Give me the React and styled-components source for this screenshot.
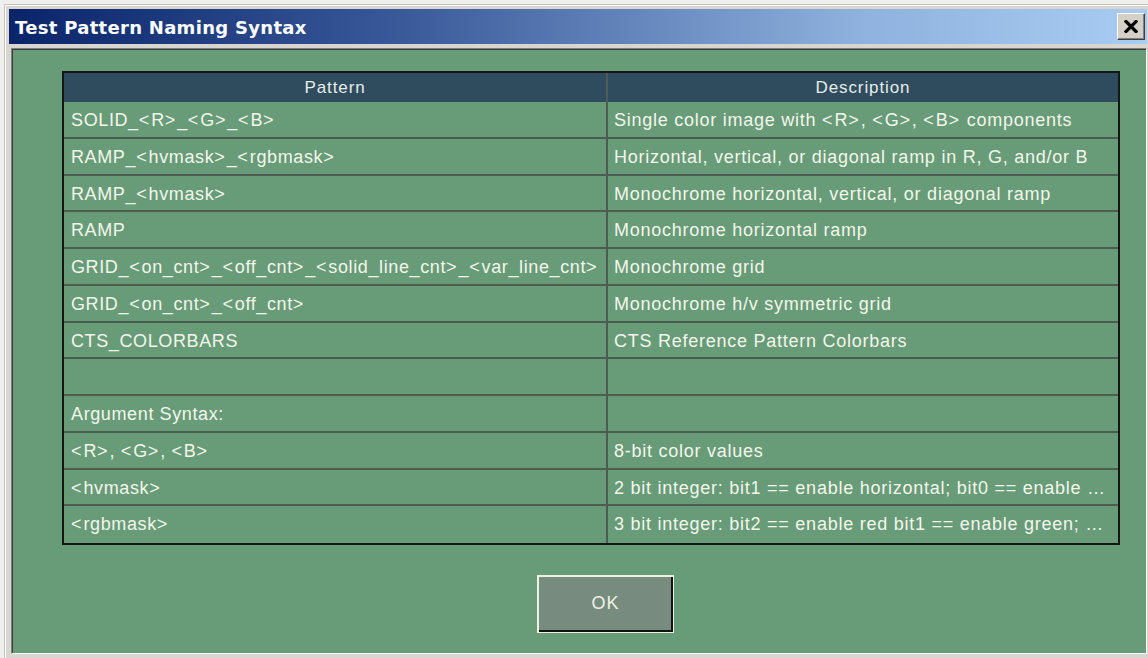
import React from "react";
import styled, { createGlobalStyle } from "styled-components";

const GlobalStyle = createGlobalStyle`
  html, body {
    margin: 0;
    padding: 0;
  }
  body {
    background: #efefed;
    overflow: hidden;
  }
  #root {
    width: 1148px;
    height: 658px;
    overflow: hidden;
  }
`;

const Desktop = styled.div`
  width: 1148px;
  height: 658px;
  box-sizing: border-box;
  padding: 4px 0 0 4px;
  background: #efefed;
  overflow: hidden;
`;

const Window = styled.div`
  width: 1148px;
  height: 670px;
  box-sizing: border-box;
  padding: 4px 5px 0 4px;
  background: #d8d6d0;
  border-top: 1px solid #c6c4be;
  border-left: 1px solid #c6c4be;
  box-shadow: inset 1px 1px 0 #fbfbf9;
  display: flex;
  flex-direction: column;
`;

const TitleBar = styled.div`
  height: 35px;
  flex: none;
  display: flex;
  align-items: center;
  justify-content: space-between;
  padding: 0 2px 0 6px;
  background: linear-gradient(to right, #0a246a 0%, #3a5a9a 35%, #8fb2de 75%, #a8ccf2 100%);
`;

const TitleText = styled.span`
  font-family: "DejaVu Sans", Verdana, sans-serif;
  font-weight: bold;
  font-size: 18px;
  letter-spacing: 0.3px;
  color: #ffffff;
  padding-top: 2px;
  white-space: nowrap;
`;

const CloseButton = styled.button`
  width: 28px;
  height: 27px;
  padding: 0;
  box-sizing: border-box;
  display: flex;
  align-items: center;
  justify-content: center;
  background: #d4d0c8;
  border-top: 1px solid #ffffff;
  border-left: 1px solid #ffffff;
  border-right: 1px solid #404040;
  border-bottom: 1px solid #404040;
  box-shadow: inset -1px -1px 0 #808080;
  cursor: default;
`;

const Client = styled.div`
  flex: none;
  height: 606px;
  margin: 4px 0 0 2px;
  box-sizing: border-box;
  padding: 22px 0 0 50px;
  background: #689b78;
  border-top: 1px solid #808080;
  border-left: 1px solid #808080;
  border-right: 1px solid #ffffff;
  border-bottom: 1px solid #ffffff;
  box-shadow: inset 1px 1px 0 #3c3c3c;
  display: flex;
  flex-direction: column;
`;

const Table = styled.div`
  width: 1058px;
  box-sizing: border-box;
  border: 2px solid #161616;
  display: grid;
  grid-template-columns: 544px 510px;
  font-family: "Liberation Sans", Arial, sans-serif;
`;

const HeaderCell = styled.div`
  height: 29px;
  line-height: 30px;
  box-sizing: border-box;
  background: #2f4c5e;
  color: #e6ece6;
  font-size: 17px;
  letter-spacing: 0.9px;
  text-align: center;
  border-right: ${(p) => (p.$left ? "2px solid #4d5e5a" : "none")};
`;

const Cell = styled.div`
  height: 36.75px;
  box-sizing: border-box;
  padding: ${(p) => (p.$left ? "0 0 0 7px" : "0 9px 0 6px")};
  border-bottom: ${(p) => (p.$last ? "none" : "2px solid #4d5c53")};
  border-right: ${(p) => (p.$left ? "2px solid #4d5c53" : "none")};
  color: #f4f6ec;
  font-size: 18px;
  letter-spacing: ${(p) => (p.$left ? "0.62px" : "0.75px")};
  line-height: 36px;
  white-space: nowrap;
  overflow: hidden;
  text-overflow: ellipsis;
`;

/* angle brackets sit a little wider in the dialog's font */
const Angle = styled.span`
  letter-spacing: 1.9px;
`;

const ButtonRow = styled.div`
  display: flex;
  padding: 30px 0 0 475px;
`;

const OkButton = styled.button`
  width: 137px;
  height: 58px;
  box-sizing: border-box;
  padding: 0 0 1px 0;
  background: #778b7f;
  border: 1px solid #eef0e0;
  box-shadow: inset 1px 1px 0 #eef0e0, inset -2px -2px 0 #121212;
  color: #eef2e6;
  font-family: "Liberation Sans", Arial, sans-serif;
  font-size: 18px;
  letter-spacing: 1px;
  cursor: default;
`;

const rows = [
  ["SOLID_<R>_<G>_<B>", "Single color image with <R>, <G>, <B> components"],
  ["RAMP_<hvmask>_<rgbmask>", "Horizontal, vertical, or diagonal ramp in R, G, and/or B"],
  ["RAMP_<hvmask>", "Monochrome horizontal, vertical, or diagonal ramp"],
  ["RAMP", "Monochrome horizontal ramp"],
  ["GRID_<on_cnt>_<off_cnt>_<solid_line_cnt>_<var_line_cnt>", "Monochrome grid"],
  ["GRID_<on_cnt>_<off_cnt>", "Monochrome h/v symmetric grid"],
  ["CTS_COLORBARS", "CTS Reference Pattern Colorbars"],
  ["", ""],
  ["Argument Syntax:", ""],
  ["<R>, <G>, <B>", "8-bit color values"],
  ["<hvmask>", "2 bit integer: bit1 == enable horizontal; bit0 == enable vertical"],
  ["<rgbmask>", "3 bit integer: bit2 == enable red bit1 == enable green; bit0 == enable blue"],
];

function Syntax({ text }) {
  return text
    .split(/([<>])/)
    .filter(Boolean)
    .map((part, i) => (part === "<" || part === ">" ? <Angle key={i}>{part}</Angle> : part));
}

function CloseGlyph() {
  return (
    <svg width="14" height="13" viewBox="0 0 14 13">
      <path d="M2 1.5 L12 11.5 M12 1.5 L2 11.5" stroke="#000" strokeWidth="3.2" strokeLinecap="square" />
    </svg>
  );
}

export default function App() {
  return (
    <>
      <GlobalStyle />
      <Desktop>
        <Window>
          <TitleBar>
            <TitleText>Test Pattern Naming Syntax</TitleText>
            <CloseButton aria-label="Close">
              <CloseGlyph />
            </CloseButton>
          </TitleBar>
          <Client>
            <Table>
              <HeaderCell $left>Pattern</HeaderCell>
              <HeaderCell>Description</HeaderCell>
              {rows.map(([pattern, desc], i) => {
                const last = i === rows.length - 1;
                return (
                  <React.Fragment key={i}>
                    <Cell $left $last={last}>
                      <Syntax text={pattern} />
                    </Cell>
                    <Cell $last={last}>
                      <Syntax text={desc} />
                    </Cell>
                  </React.Fragment>
                );
              })}
            </Table>
            <ButtonRow>
              <OkButton>OK</OkButton>
            </ButtonRow>
          </Client>
        </Window>
      </Desktop>
    </>
  );
}
